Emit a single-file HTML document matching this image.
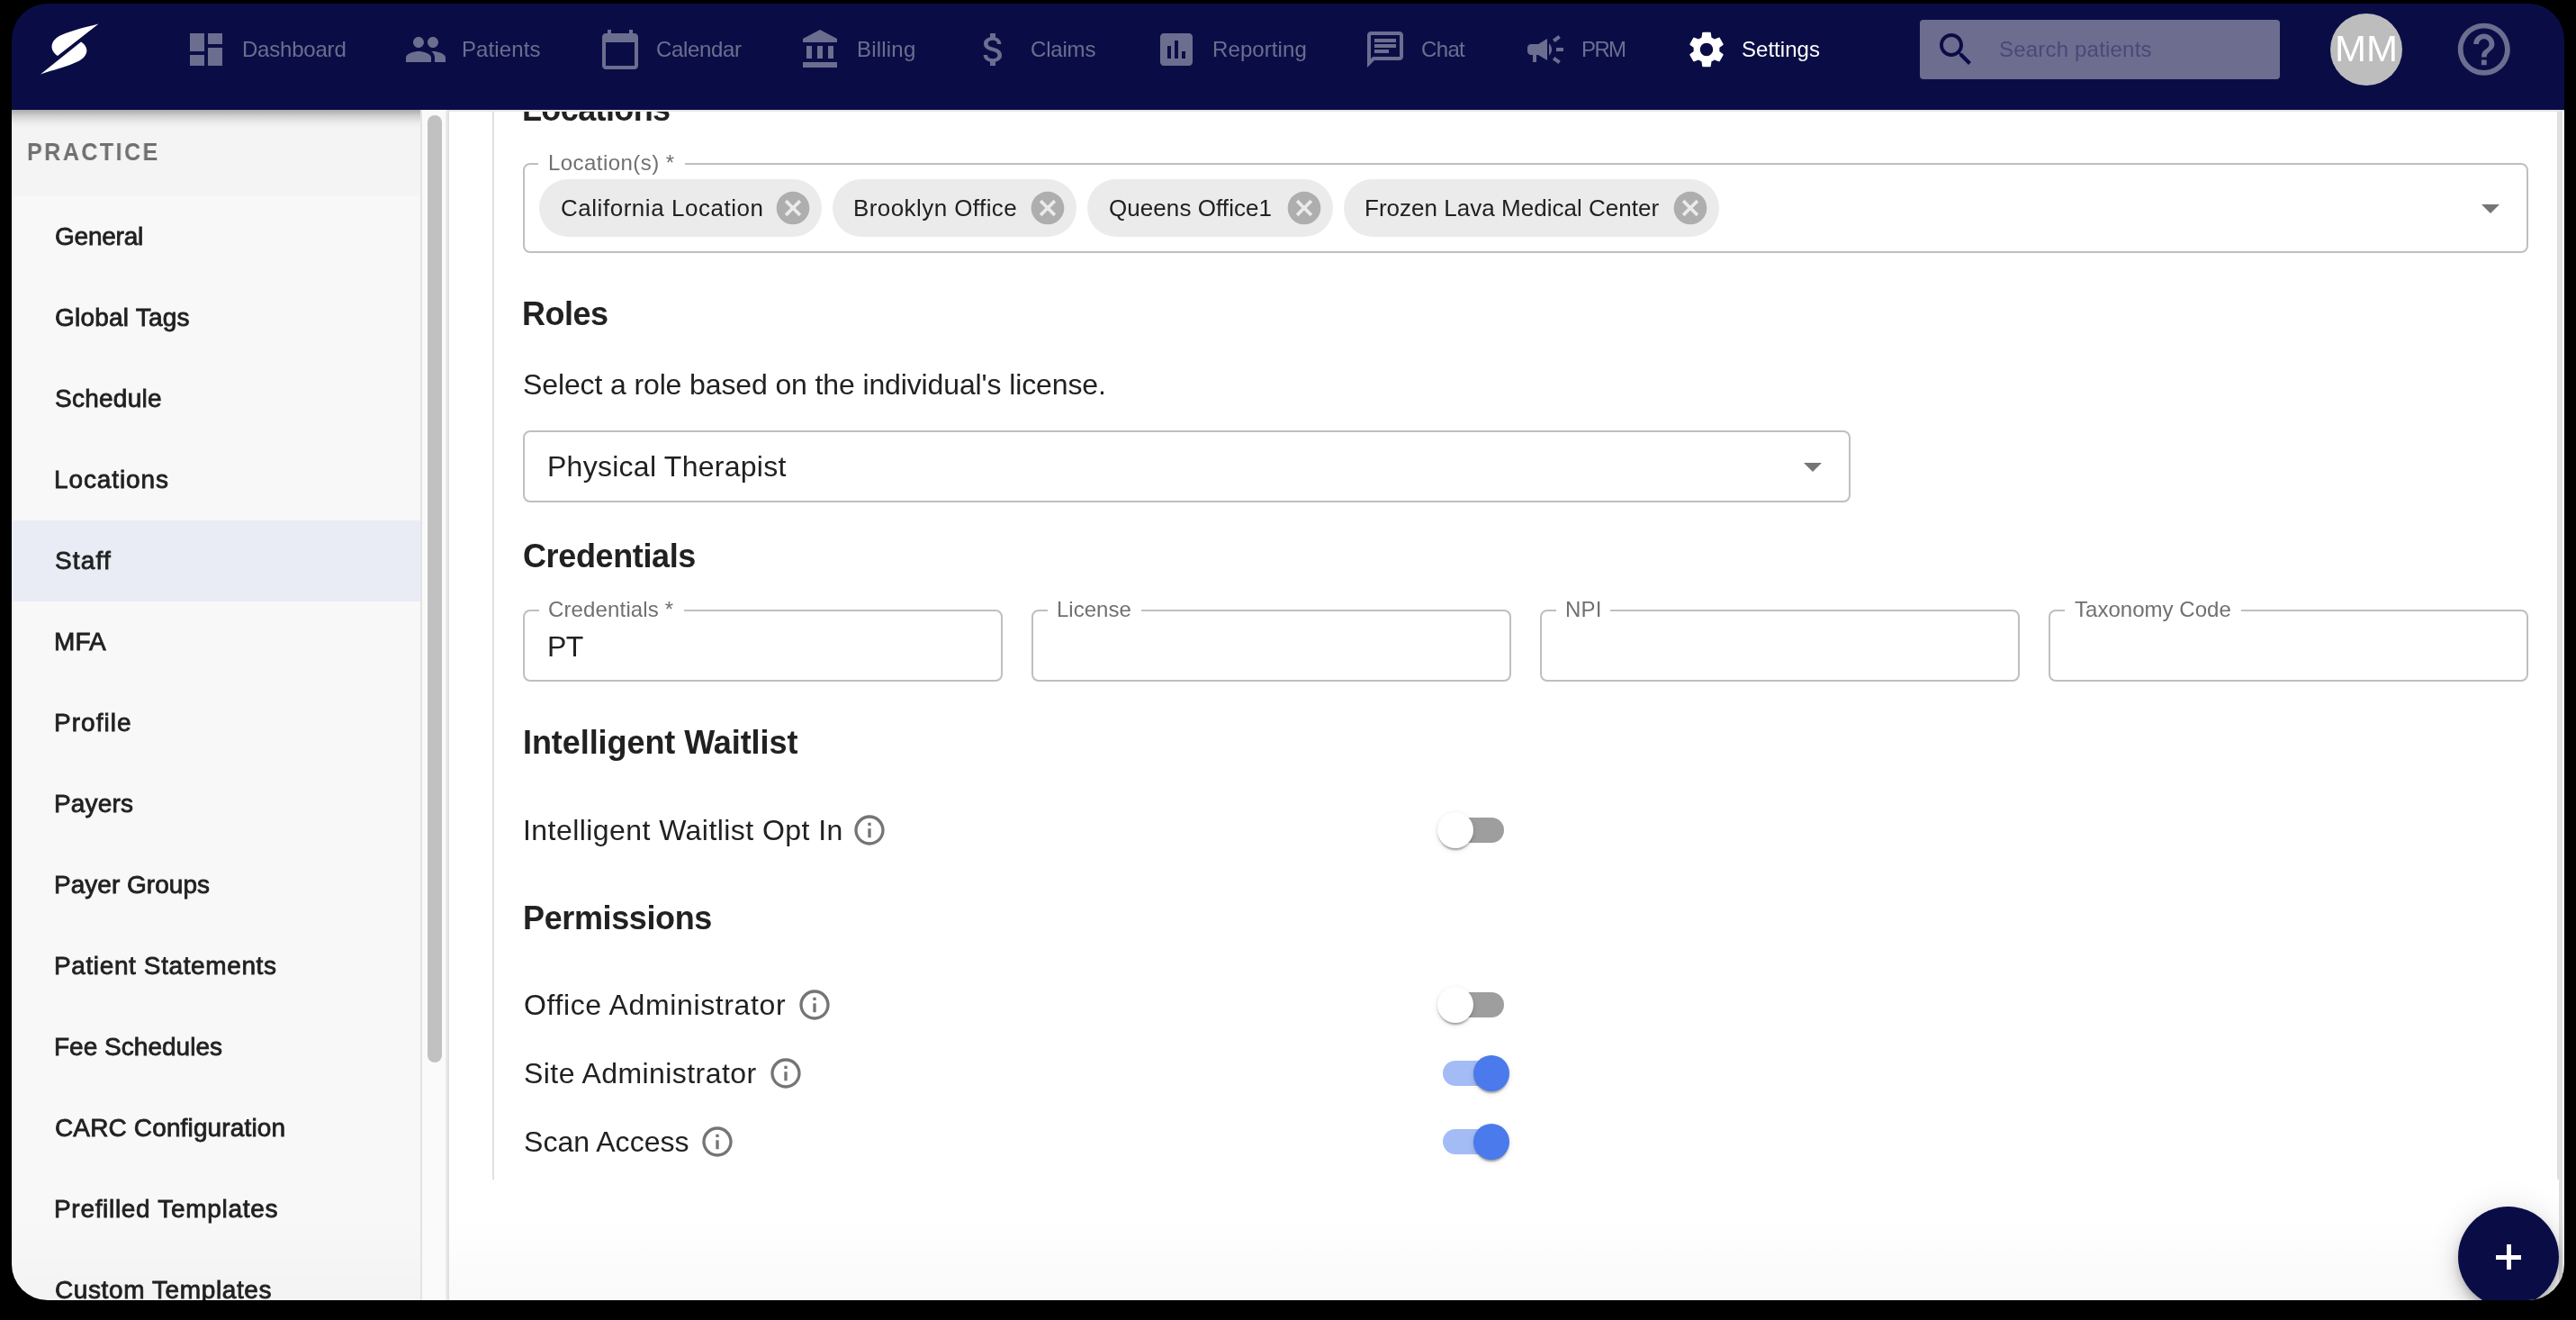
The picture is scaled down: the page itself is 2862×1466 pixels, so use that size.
<!DOCTYPE html>
<html><head><meta charset="utf-8"><style>
html,body{margin:0;padding:0;background:#000;width:2862px;height:1466px;overflow:hidden}
#win{position:absolute;left:0;top:0;width:2862px;height:1466px;background:transparent;clip-path:inset(4px 13px 22px 13px round 40px);overflow:hidden}
.t{position:absolute;white-space:nowrap;font-family:"Liberation Sans",sans-serif;will-change:transform}
.i{position:absolute;display:block}
.b{position:absolute}
.fo{position:absolute;box-sizing:border-box;border:2px solid #bfbfbf;border-radius:8px}
.notch{position:absolute;height:4px;background:#fff}
.chip{position:absolute;top:199px;height:64px;border-radius:32px;background:#ebebeb}
.track{position:absolute;left:1603px;width:68px;height:28px;border-radius:14px;background:#9e9e9e}
.track.on{background:#a4bcf5}
.thumb{position:absolute;width:40px;height:40px;border-radius:20px;background:#fff;box-shadow:0 4px 2px -2px rgba(0,0,0,.2),0 2px 2px 0 rgba(0,0,0,.14),0 2px 6px 0 rgba(0,0,0,.12)}
.thumb.on{background:#4a7aec}
</style></head><body>
<div id="win">
<!-- content bg -->
<div class="b" style="left:499px;top:122px;width:2350px;height:1322px;background:#fff"></div>
<!-- content left line -->
<div class="b" style="left:547px;top:122px;width:2px;height:1188px;background:#e0e0e0"></div>
<!-- right strip -->
<div class="b" style="left:2841px;top:122px;width:6px;height:1188px;background:#e0e0e0"></div>
<div class="b" style="left:2843px;top:1310px;width:4px;height:140px;background:#e0e0e0"></div>
<!-- bottom fade -->
<div class="b" style="left:499px;top:1350px;width:2350px;height:94px;background:linear-gradient(to bottom,rgba(0,0,0,0),rgba(0,0,0,0.022))"></div>


<!-- sidebar -->
<div class="b" style="left:13px;top:122px;width:454px;height:1322px;background:#f8f8f8"></div>
<div class="b" style="left:13px;top:122px;width:454px;height:96px;background:#f4f4f4"></div>
<div class="b" style="left:13px;top:578px;width:454px;height:90px;background:#e9ecf5"></div>
<div class="b" style="left:13px;top:122px;width:454px;height:20px;background:linear-gradient(to bottom,rgba(0,0,0,0.3) 0%,rgba(0,0,0,0.14) 35%,rgba(0,0,0,0.04) 70%,rgba(0,0,0,0) 100%)"></div>
<div class="b" style="left:13px;top:1350px;width:454px;height:94px;background:linear-gradient(to bottom,rgba(0,0,0,0),rgba(0,0,0,0.02))"></div>
<div class="b" style="left:467px;top:122px;width:2px;height:1322px;background:#e3e3e3"></div>
<div class="b" style="left:469px;top:122px;width:26px;height:1322px;background:#fafafa"></div>
<div class="b" style="left:475px;top:128px;width:16px;height:1052px;border-radius:8px;background:#c1c1c1"></div>
<div class="b" style="left:495px;top:122px;width:4px;height:1322px;background:linear-gradient(to right,#efefef,#dcdcdc)"></div>

<div class="fo" style="left:581px;top:181px;width:2228px;height:100px"></div><div class="notch" style="left:598.4px;top:180px;width:162.2px"></div>
<div class="fo" style="left:581px;top:478px;width:1475px;height:80px"></div>
<div class="fo" style="left:581px;top:677px;width:533px;height:80px"></div><div class="notch" style="left:598.6px;top:676px;width:161.1px"></div>
<div class="fo" style="left:1146px;top:677px;width:533px;height:80px"></div><div class="notch" style="left:1163.6px;top:676px;width:104.0px"></div>
<div class="fo" style="left:1711px;top:677px;width:533px;height:80px"></div><div class="notch" style="left:1728.9px;top:676px;width:60.0px"></div>
<div class="fo" style="left:2276px;top:677px;width:533px;height:80px"></div><div class="notch" style="left:2293.8px;top:676px;width:196.1px"></div>
<div class="chip" style="left:599.2px;width:313.6px"></div>
<div class="chip" style="left:925.3px;width:270.4px"></div>
<div class="chip" style="left:1208.0px;width:272.6px"></div>
<div class="chip" style="left:1492.8px;width:416.9px"></div>
<div class="track" style="top:908px"></div><div class="thumb" style="left:1597px;top:902px"></div><div class="track" style="top:1102px"></div><div class="thumb" style="left:1597px;top:1096px"></div><div class="track on" style="top:1178px"></div><div class="thumb on" style="left:1637px;top:1172px"></div><div class="track on" style="top:1254px"></div><div class="thumb on" style="left:1637px;top:1248px"></div>
<svg class="i" style="left:859.00px;top:209.20px;width:44px;height:44px" viewBox="0 0 24 24"><path fill="#aeaeae" d="M12 2C6.47 2 2 6.47 2 12s4.47 10 10 10 10-4.47 10-10S17.53 2 12 2zm5 13.59L15.59 17 12 13.41 8.41 17 7 15.59 10.59 12 7 8.41 8.41 7 12 10.59 15.59 7 17 8.41 13.41 12 17 15.59z"/></svg>
<svg class="i" style="left:1142.00px;top:209.20px;width:44px;height:44px" viewBox="0 0 24 24"><path fill="#aeaeae" d="M12 2C6.47 2 2 6.47 2 12s4.47 10 10 10 10-4.47 10-10S17.53 2 12 2zm5 13.59L15.59 17 12 13.41 8.41 17 7 15.59 10.59 12 7 8.41 8.41 7 12 10.59 15.59 7 17 8.41 13.41 12 17 15.59z"/></svg>
<svg class="i" style="left:1426.80px;top:209.20px;width:44px;height:44px" viewBox="0 0 24 24"><path fill="#aeaeae" d="M12 2C6.47 2 2 6.47 2 12s4.47 10 10 10 10-4.47 10-10S17.53 2 12 2zm5 13.59L15.59 17 12 13.41 8.41 17 7 15.59 10.59 12 7 8.41 8.41 7 12 10.59 15.59 7 17 8.41 13.41 12 17 15.59z"/></svg>
<svg class="i" style="left:1855.70px;top:209.20px;width:44px;height:44px" viewBox="0 0 24 24"><path fill="#aeaeae" d="M12 2C6.47 2 2 6.47 2 12s4.47 10 10 10 10-4.47 10-10S17.53 2 12 2zm5 13.59L15.59 17 12 13.41 8.41 17 7 15.59 10.59 12 7 8.41 8.41 7 12 10.59 15.59 7 17 8.41 13.41 12 17 15.59z"/></svg>
<svg class="i" style="left:2743.00px;top:207.00px;width:48px;height:48px" viewBox="0 0 24 24"><path fill="#757575" d="M7 10l5 5 5-5z"/></svg>
<svg class="i" style="left:1990.00px;top:494.00px;width:48px;height:48px" viewBox="0 0 24 24"><path fill="#757575" d="M7 10l5 5 5-5z"/></svg>
<svg class="i" style="left:946.00px;top:902.00px;width:40px;height:40px" viewBox="0 0 24 24"><path fill="#757575" d="M11 7h2v2h-2zm0 4h2v6h-2zm1-9C6.48 2 2 6.48 2 12s4.48 10 10 10 10-4.48 10-10S17.52 2 12 2zm0 18c-4.41 0-8-3.59-8-8s3.59-8 8-8 8 3.59 8 8-3.59 8-8 8z"/></svg>
<svg class="i" style="left:885.00px;top:1096.00px;width:40px;height:40px" viewBox="0 0 24 24"><path fill="#757575" d="M11 7h2v2h-2zm0 4h2v6h-2zm1-9C6.48 2 2 6.48 2 12s4.48 10 10 10 10-4.48 10-10S17.52 2 12 2zm0 18c-4.41 0-8-3.59-8-8s3.59-8 8-8 8 3.59 8 8-3.59 8-8 8z"/></svg>
<svg class="i" style="left:853.00px;top:1172.00px;width:40px;height:40px" viewBox="0 0 24 24"><path fill="#757575" d="M11 7h2v2h-2zm0 4h2v6h-2zm1-9C6.48 2 2 6.48 2 12s4.48 10 10 10 10-4.48 10-10S17.52 2 12 2zm0 18c-4.41 0-8-3.59-8-8s3.59-8 8-8 8 3.59 8 8-3.59 8-8 8z"/></svg>
<svg class="i" style="left:777.00px;top:1248.00px;width:40px;height:40px" viewBox="0 0 24 24"><path fill="#757575" d="M11 7h2v2h-2zm0 4h2v6h-2zm1-9C6.48 2 2 6.48 2 12s4.48 10 10 10 10-4.48 10-10S17.52 2 12 2zm0 18c-4.41 0-8-3.59-8-8s3.59-8 8-8 8 3.59 8 8-3.59 8-8 8z"/></svg>
<div class="t" style="left:29.70px;top:155.10px;font-size:28px;line-height:28px;letter-spacing:2.619px;font-weight:bold;color:#707070;transform:scaleX(0.9000);transform-origin:0 0;">PRACTICE</div>
<div class="t" style="left:60.80px;top:248.60px;font-size:28px;line-height:28px;letter-spacing:-0.232px;font-weight:normal;color:#212121;-webkit-text-stroke:0.8px #212121;">General</div>
<div class="t" style="left:60.80px;top:338.60px;font-size:28px;line-height:28px;letter-spacing:0.214px;font-weight:normal;color:#212121;-webkit-text-stroke:0.8px #212121;">Global Tags</div>
<div class="t" style="left:60.80px;top:428.60px;font-size:28px;line-height:28px;letter-spacing:0.259px;font-weight:normal;color:#212121;-webkit-text-stroke:0.8px #212121;">Schedule</div>
<div class="t" style="left:59.80px;top:518.60px;font-size:28px;line-height:28px;letter-spacing:0.892px;font-weight:normal;color:#212121;-webkit-text-stroke:0.8px #212121;">Locations</div>
<div class="t" style="left:60.80px;top:608.60px;font-size:28px;line-height:28px;letter-spacing:1.175px;font-weight:normal;color:#212121;-webkit-text-stroke:0.8px #212121;">Staff</div>
<div class="t" style="left:59.80px;top:698.60px;font-size:28px;line-height:28px;letter-spacing:0.059px;font-weight:normal;color:#212121;-webkit-text-stroke:0.8px #212121;">MFA</div>
<div class="t" style="left:59.80px;top:788.60px;font-size:28px;line-height:28px;letter-spacing:1.035px;font-weight:normal;color:#212121;-webkit-text-stroke:0.8px #212121;">Profile</div>
<div class="t" style="left:59.80px;top:878.60px;font-size:28px;line-height:28px;letter-spacing:0.171px;font-weight:normal;color:#212121;-webkit-text-stroke:0.8px #212121;">Payers</div>
<div class="t" style="left:59.80px;top:968.60px;font-size:28px;line-height:28px;letter-spacing:0.023px;font-weight:normal;color:#212121;-webkit-text-stroke:0.8px #212121;">Payer Groups</div>
<div class="t" style="left:59.80px;top:1058.60px;font-size:28px;line-height:28px;letter-spacing:0.613px;font-weight:normal;color:#212121;-webkit-text-stroke:0.8px #212121;">Patient Statements</div>
<div class="t" style="left:59.80px;top:1148.60px;font-size:28px;line-height:28px;letter-spacing:0.018px;font-weight:normal;color:#212121;-webkit-text-stroke:0.8px #212121;">Fee Schedules</div>
<div class="t" style="left:60.80px;top:1238.60px;font-size:28px;line-height:28px;letter-spacing:0.141px;font-weight:normal;color:#212121;-webkit-text-stroke:0.8px #212121;">CARC Configuration</div>
<div class="t" style="left:59.80px;top:1328.60px;font-size:28px;line-height:28px;letter-spacing:0.692px;font-weight:normal;color:#212121;-webkit-text-stroke:0.8px #212121;">Prefilled Templates</div>
<div class="t" style="left:60.80px;top:1418.60px;font-size:28px;line-height:28px;letter-spacing:0.609px;font-weight:normal;color:#212121;-webkit-text-stroke:0.8px #212121;">Custom Templates</div>
<div class="t" style="left:580.00px;top:103.53px;font-size:36px;line-height:36px;letter-spacing:-0.624px;font-weight:bold;color:#212121;">Locations</div>
<div class="t" style="left:609.00px;top:168.68px;font-size:24px;line-height:24px;letter-spacing:0.442px;font-weight:normal;color:#707070;">Location(s) *</div>
<div class="t" style="left:622.70px;top:218.49px;font-size:26px;line-height:26px;letter-spacing:0.534px;font-weight:normal;color:#212121;">California Location</div>
<div class="t" style="left:947.80px;top:218.49px;font-size:26px;line-height:26px;letter-spacing:0.424px;font-weight:normal;color:#212121;">Brooklyn Office</div>
<div class="t" style="left:1232.10px;top:218.49px;font-size:26px;line-height:26px;letter-spacing:0.067px;font-weight:normal;color:#212121;">Queens Office1</div>
<div class="t" style="left:1516.10px;top:218.49px;font-size:26px;line-height:26px;letter-spacing:0.022px;font-weight:normal;color:#212121;">Frozen Lava Medical Center</div>
<div class="t" style="left:579.70px;top:330.63px;font-size:36px;line-height:36px;letter-spacing:-0.503px;font-weight:bold;color:#212121;">Roles</div>
<div class="t" style="left:580.70px;top:410.61px;font-size:32px;line-height:32px;letter-spacing:-0.122px;font-weight:normal;color:#212121;">Select a role based on the individual's license.</div>
<div class="t" style="left:608.30px;top:501.71px;font-size:32px;line-height:32px;letter-spacing:0.262px;font-weight:normal;color:#212121;">Physical Therapist</div>
<div class="t" style="left:580.70px;top:599.73px;font-size:36px;line-height:36px;letter-spacing:-0.374px;font-weight:bold;color:#212121;">Credentials</div>
<div class="t" style="left:608.70px;top:664.78px;font-size:24px;line-height:24px;letter-spacing:0.145px;font-weight:normal;color:#707070;">Credentials *</div>
<div class="t" style="left:1173.70px;top:664.78px;font-size:24px;line-height:24px;letter-spacing:0.000px;font-weight:normal;color:#707070;">License</div>
<div class="t" style="left:1739.00px;top:664.78px;font-size:24px;line-height:24px;letter-spacing:0.230px;font-weight:normal;color:#707070;">NPI</div>
<div class="t" style="left:2304.90px;top:664.78px;font-size:24px;line-height:24px;letter-spacing:0.027px;font-weight:normal;color:#707070;">Taxonomy Code</div>
<div class="t" style="left:607.70px;top:701.51px;font-size:32px;line-height:32px;letter-spacing:-0.544px;font-weight:normal;color:#212121;">PT</div>
<div class="t" style="left:580.90px;top:807.03px;font-size:36px;line-height:36px;letter-spacing:-0.067px;font-weight:bold;color:#212121;">Intelligent Waitlist</div>
<div class="t" style="left:580.90px;top:906.11px;font-size:32px;line-height:32px;letter-spacing:0.441px;font-weight:normal;color:#212121;">Intelligent Waitlist Opt In</div>
<div class="t" style="left:580.90px;top:1001.93px;font-size:36px;line-height:36px;letter-spacing:-0.378px;font-weight:bold;color:#212121;">Permissions</div>
<div class="t" style="left:581.50px;top:1100.11px;font-size:32px;line-height:32px;letter-spacing:0.630px;font-weight:normal;color:#212121;">Office Administrator</div>
<div class="t" style="left:581.50px;top:1176.21px;font-size:32px;line-height:32px;letter-spacing:0.431px;font-weight:normal;color:#212121;">Site Administrator</div>
<div class="t" style="left:581.50px;top:1252.11px;font-size:32px;line-height:32px;letter-spacing:0.033px;font-weight:normal;color:#212121;">Scan Access</div>

<!-- nav -->
<div class="b" style="left:13px;top:0px;width:2836px;height:122px;background:#0a0d45"></div>
<div class="b" style="left:499px;top:122px;width:2350px;height:2px;background:#e6e6e6"></div>
<div class="b" style="left:2133px;top:22px;width:400px;height:66px;border-radius:4px;background:rgba(255,255,255,0.4)"></div>
<div class="b" style="left:2589px;top:15px;width:80px;height:80px;border-radius:40px;background:#bdbdbd"></div>
<svg class="i" style="left:40px;top:20px;width:75px;height:70px" viewBox="0 0 75 70"><path fill="#fff" d="M69.5,6.5 C58,9.5 40,13.5 28,19 C16,24.5 14,35 24,42 Z"/><path fill="#fff" d="M5,62.5 C18,58 36,53.5 46,48.5 C58,43 60,33 50,26.5 Z"/></svg>
<svg class="i" style="left:205.00px;top:30.80px;width:48px;height:48px" viewBox="0 0 24 24"><path fill="#6b6e8f" d="M3 13h8V3H3v10zm0 8h8v-6H3v6zm10 0h8V11h-8v10zm0-18v6h8V3h-8z"/></svg>
<svg class="i" style="left:449.00px;top:30.80px;width:48px;height:48px" viewBox="0 0 24 24"><path fill="#6b6e8f" d="M16 11c1.66 0 2.99-1.34 2.99-3S17.66 5 16 5c-1.66 0-3 1.34-3 3s1.34 3 3 3zm-8 0c1.66 0 2.99-1.34 2.99-3S9.66 5 8 5C6.34 5 5 6.34 5 8s1.34 3 3 3zm0 2c-2.33 0-7 1.170-7 3.5V19h14v-2.5c0-2.33-4.67-3.5-7-3.5zm8 0c-.29 0-.62.02-.97.05 1.16.84 1.97 1.97 1.97 3.45V19h6v-2.5c0-2.33-4.67-3.5-7-3.5z"/></svg>
<svg class="i" style="left:664.80px;top:30.80px;width:48px;height:48px" viewBox="0 0 24 24"><path fill="#6b6e8f" d="M20 3h-1V1h-2v2H7V1H5v2H4c-1.1 0-2 .9-2 2v16c0 1.1.9 2 2 2h16c1.1 0 2-.9 2-2V5c0-1.1-.9-2-2-2zm0 18H4V8h16v13z"/></svg>
<svg class="i" style="left:887.70px;top:30.80px;width:48px;height:48px" viewBox="0 0 24 24"><path fill="#6b6e8f" d="M4 10v7h3v-7H4zm6 0v7h3v-7h-3zM2 22h19v-3H2v3zm14-12v7h3v-7h-3zm-4.5-9L2 6v2h19V6l-9.5-5z"/></svg>
<svg class="i" style="left:1080.00px;top:30.80px;width:48px;height:48px" viewBox="0 0 24 24"><path fill="#6b6e8f" d="M11.8 10.9c-2.27-.59-3-1.2-3-2.15 0-1.09 1.01-1.85 2.7-1.85 1.78 0 2.44.85 2.5 2.1h2.21c-.07-1.72-1.12-3.3-3.210-3.81V3h-3v2.16c-1.94.42-3.5 1.68-3.5 3.61 0 2.31 1.91 3.46 4.7 4.13 2.5.6 3 1.48 3 2.41 0 .69-.49 1.79-2.7 1.79-2.06 0-2.87-.92-2.98-2.1h-2.2c.12 2.19 1.76 3.42 3.68 3.83V21h3v-2.15c1.95-.37 3.5-1.5 3.5-3.55 0-2.84-2.43-3.81-4.7-4.4z"/></svg>
<svg class="i" style="left:1283.00px;top:30.80px;width:48px;height:48px" viewBox="0 0 24 24"><path fill="#6b6e8f" d="M19 3H5c-1.1 0-2 .9-2 2v14c0 1.1.9 2 2 2h14c1.1 0 2-.9 2-2V5c0-1.1-.9-2-2-2zM9 17H7v-7h2v7zm4 0h-2V7h2v10zm4 0h-2v-4h2v4z"/></svg>
<svg class="i" style="left:1515.00px;top:30.80px;width:48px;height:48px" viewBox="0 0 24 24"><path fill="#6b6e8f" d="M4 4h16v12H5.17L4 17.17V4m0-2c-1.1 0-1.99.9-1.99 2L2 22l4-4h14c1.1 0 2-.9 2-2V4c0-1.1-.9-2-2-2H4zm2 10h8v2H6v-2zm0-3h12v2H6V9zm0-3h12v2H6V6z"/></svg>
<svg class="i" style="left:1692.70px;top:30.80px;width:48px;height:48px" viewBox="0 0 24 24"><path fill="#6b6e8f" d="M18 11v2h4v-2h-4zm-2 6.61c.96.71 2.21 1.65 3.2 2.39.4-.53.8-1.07 1.2-1.6-.99-.74-2.24-1.68-3.2-2.4-.4.54-.8 1.08-1.2 1.61zM20.4 5.6c-.4-.53-.8-1.07-1.2-1.6-.99.74-2.24 1.68-3.2 2.4.4.53.8 1.07 1.2 1.6.96-.72 2.21-1.65 3.2-2.4zM4 9c-1.1 0-2 .9-2 2v2c0 1.1.9 2 2 2h1v4h2v-4h1l5 3V6L8 9H4zm11.5 3c0-1.33-.58-2.53-1.5-3.35v6.69c.92-.81 1.5-2.01 1.5-3.34z"/></svg>
<svg class="i" style="left:1872.00px;top:30.90px;width:48px;height:48px" viewBox="0 0 24 24"><path fill="#ffffff" d="M19.14 12.94c.04-.3.06-.61.06-.94 0-.32-.02-.64-.07-.94l2.03-1.58c.18-.14.23-.41.12-.61l-1.92-3.32c-.12-.22-.37-.29-.59-.22l-2.39.96c-.5-.38-1.03-.7-1.62-.94l-.36-2.54c-.04-.24-.24-.41-.48-.41h-3.84c-.24 0-.43.17-.47.41l-.36 2.54c-.59.24-1.13.57-1.62.94l-2.39-.96c-.22-.08-.47 0-.59.22L2.74 8.87c-.12.21-.08.47.12.61l2.03 1.58c-.05.3-.09.63-.09.94s.02.64.07.94l-2.03 1.58c-.18.14-.23.41-.12.61l1.92 3.32c.12.22.37.29.59.22l2.39-.96c.5.38 1.03.7 1.62.94l.36 2.54c.05.24.24.41.48.41h3.84c.24 0 .44-.17.47-.41l.36-2.54c.59-.24 1.13-.56 1.62-.94l2.39.96c.22.08.47 0 .59-.22l1.92-3.32c.12-.22.07-.47-.12-.61l-2.01-1.58zM12 15.6c-1.98 0-3.6-1.62-3.6-3.6s1.62-3.6 3.6-3.6 3.6 1.62 3.6 3.6-1.62 3.6-3.6 3.6z"/></svg>
<svg class="i" style="left:2149.00px;top:30.70px;width:48px;height:48px" viewBox="0 0 24 24"><path fill="#0a0d45" d="M15.5 14h-.79l-.28-.27C15.41 12.59 16 11.11 16 9.5 16 5.91 13.09 3 9.5 3S3 5.91 3 9.5 5.91 16 9.5 16c1.61 0 3.09-.59 4.23-1.57l.27.28v.79l5 4.99L20.49 19l-4.99-5zm-6 0C7.01 14 5 11.99 5 9.5S7.01 5 9.5 5 14 7.01 14 9.5 11.99 14 9.5 14z"/></svg>
<svg class="i" style="left:2725.20px;top:20.20px;width:69.6px;height:69.6px" viewBox="0 0 24 24"><path fill="#6b6e8f" d="M11 18h2v-2h-2v2zm1-16C6.48 2 2 6.48 2 12s4.48 10 10 10 10-4.48 10-10S17.52 2 12 2zm0 18c-4.41 0-8-3.59-8-8s3.59-8 8-8 8 3.59 8 8-3.59 8-8 8zm0-14c-2.21 0-4 1.79-4 4h2c0-1.1.9-2 2-2s2 .9 2 2c0 2-3 1.75-3 5h2c0-2.25 3-2.5 3-5 0-2.21-1.79-4-4-4z"/></svg>
<div class="t" style="left:269.30px;top:42.98px;font-size:24px;line-height:24px;letter-spacing:-0.208px;font-weight:normal;color:#6b6e8f;">Dashboard</div>
<div class="t" style="left:512.80px;top:42.98px;font-size:24px;line-height:24px;letter-spacing:0.112px;font-weight:normal;color:#6b6e8f;">Patients</div>
<div class="t" style="left:728.70px;top:42.98px;font-size:24px;line-height:24px;letter-spacing:-0.357px;font-weight:normal;color:#6b6e8f;">Calendar</div>
<div class="t" style="left:952.40px;top:42.98px;font-size:24px;line-height:24px;letter-spacing:0.203px;font-weight:normal;color:#6b6e8f;">Billing</div>
<div class="t" style="left:1145.40px;top:42.98px;font-size:24px;line-height:24px;letter-spacing:-0.187px;font-weight:normal;color:#6b6e8f;">Claims</div>
<div class="t" style="left:1346.60px;top:42.98px;font-size:24px;line-height:24px;letter-spacing:0.098px;font-weight:normal;color:#6b6e8f;">Reporting</div>
<div class="t" style="left:1578.80px;top:42.98px;font-size:24px;line-height:24px;letter-spacing:-0.642px;font-weight:normal;color:#6b6e8f;">Chat</div>
<div class="t" style="left:1757.20px;top:42.98px;font-size:24px;line-height:24px;letter-spacing:-1.620px;font-weight:normal;color:#6b6e8f;">PRM</div>
<div class="t" style="left:1935.30px;top:42.98px;font-size:24px;line-height:24px;letter-spacing:0.026px;font-weight:normal;color:#ffffff;">Settings</div>
<div class="t" style="left:2220.90px;top:42.78px;font-size:24px;line-height:24px;letter-spacing:0.195px;font-weight:normal;color:#474a78;">Search patients</div>
<div class="t" style="left:2593.55px;top:34.04px;font-size:40px;line-height:40px;letter-spacing:0.000px;font-weight:normal;color:#ffffff;transform:scaleX(1.0486);transform-origin:0 0;">MM</div>

<!-- FAB -->
<div class="b" style="left:2731px;top:1340px;width:112px;height:112px;border-radius:56px;background:#0a0d45;box-shadow:0 6px 10px -2px rgba(0,0,0,.2),0 12px 20px 0 rgba(0,0,0,.14),0 2px 36px 0 rgba(0,0,0,.12)"></div>
<div class="b" style="left:2773px;top:1393.5px;width:28px;height:5px;background:#fff"></div>
<div class="b" style="left:2784.5px;top:1382px;width:5px;height:28px;background:#fff"></div>
</div>
</body></html>
